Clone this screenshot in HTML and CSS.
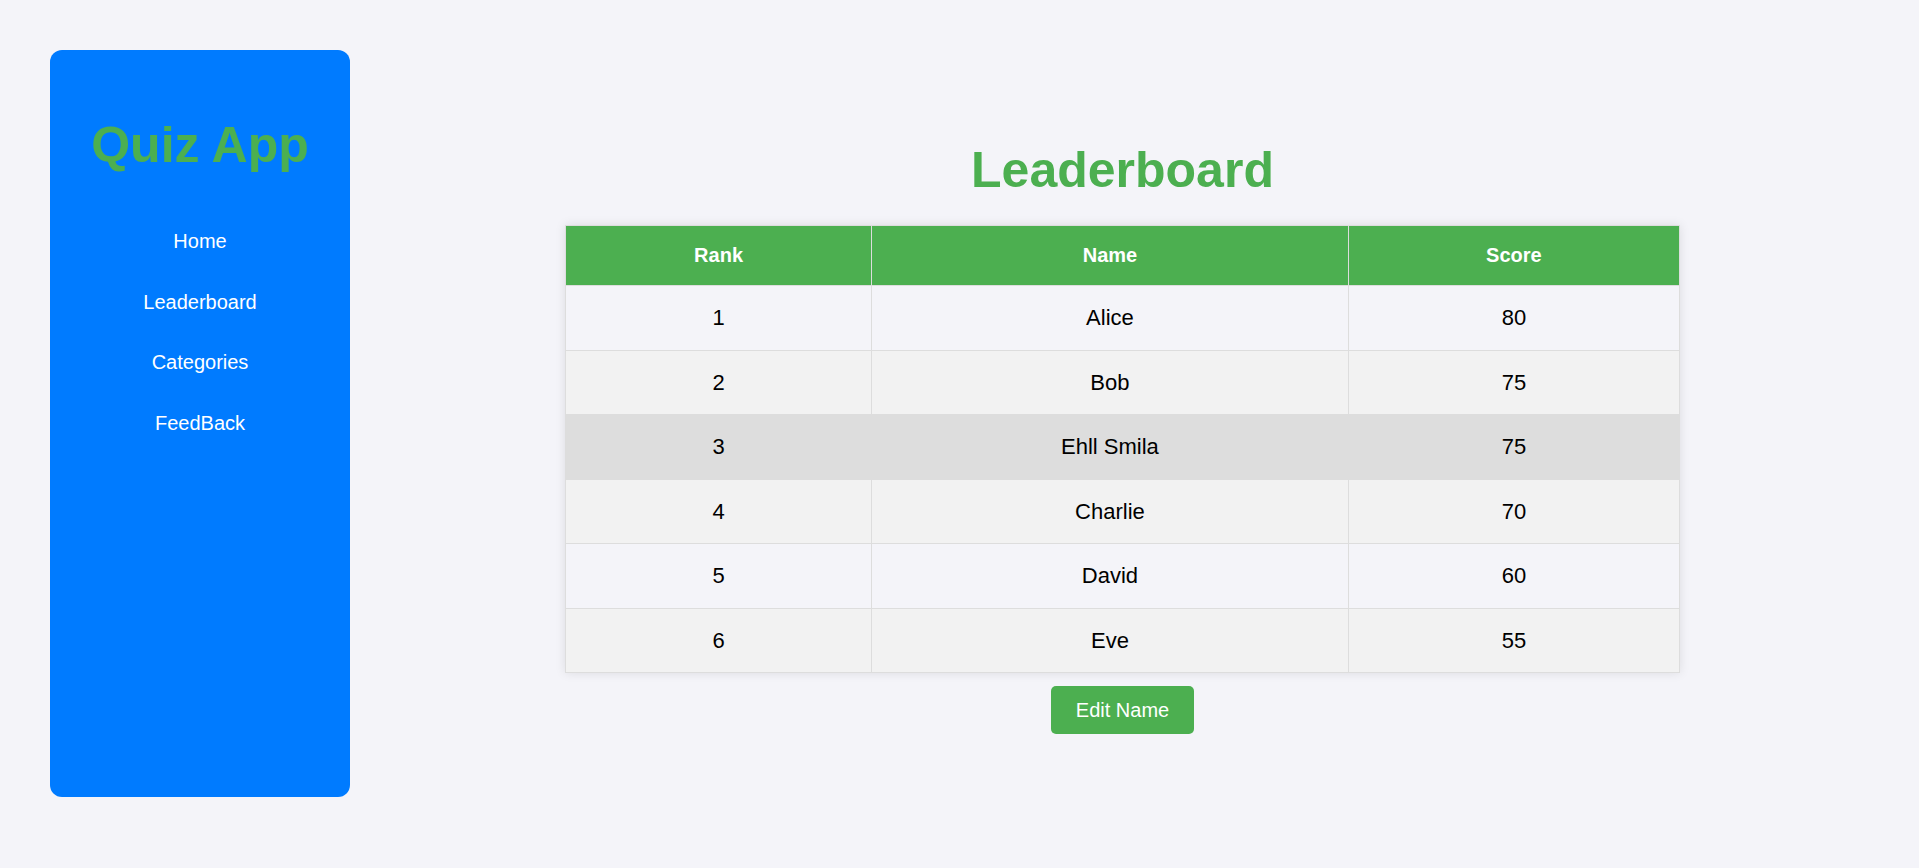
FILE: index.html
```html
<!DOCTYPE html>
<html lang="en">
<head>
<meta charset="UTF-8">
<title>Quiz App - Leaderboard</title>
<link rel="stylesheet" href="styles.css">
</head>
<body>
<div class="layout">
  <aside class="sidebar">
    <h1 class="brand">Quiz App</h1>
    <nav class="nav">
      <a href="#" class="nav-link">Home</a>
      <a href="#" class="nav-link">Leaderboard</a>
      <a href="#" class="nav-link">Categories</a>
      <a href="#" class="nav-link">FeedBack</a>
    </nav>
  </aside>
  <main class="main">
    <h1 class="title">Leaderboard</h1>
    <table class="board">
      <colgroup>
        <col class="c-rank">
        <col class="c-name">
        <col class="c-score">
      </colgroup>
      <thead>
        <tr><th>Rank</th><th>Name</th><th>Score</th></tr>
      </thead>
      <tbody>
        <tr><td>1</td><td>Alice</td><td>80</td></tr>
        <tr><td>2</td><td>Bob</td><td>75</td></tr>
        <tr class="active"><td>3</td><td>Ehll Smila</td><td>75</td></tr>
        <tr><td>4</td><td>Charlie</td><td>70</td></tr>
        <tr><td>5</td><td>David</td><td>60</td></tr>
        <tr><td>6</td><td>Eve</td><td>55</td></tr>
      </tbody>
    </table>
    <button class="edit-btn">Edit Name</button>
  </main>
</div>
</body>
</html>
```
FILE: styles.css
```css
html, body {
  margin: 0;
  padding: 0;
}
body {
  background: #f4f4f9;
  font-family: "Liberation Sans", Arial, sans-serif;
  color: #000;
}
.layout {
  display: flex;
  align-items: flex-start;
  padding: 50px 0 0 50px;
}
.sidebar {
  width: 300px;
  height: 747px;
  flex: 0 0 300px;
  background: #007bff;
  border-radius: 12px;
  box-sizing: border-box;
  padding-top: 67px;
  text-align: center;
}
.brand {
  margin: 0;
  font-size: 50px;
  line-height: 57px;
  font-weight: bold;
  color: #4caf50;
}
.nav {
  display: flex;
  flex-direction: column;
  margin-top: 37px;
}
.nav-link {
  display: block;
  color: #fff;
  text-decoration: none;
  font-size: 20px;
  line-height: 22.5px;
  padding: 19px 0;
}
.main {
  flex: 1;
  padding: 0 100px 0 76px;
  text-align: center;
}
.title {
  margin: 92px 0 26px;
  font-size: 50px;
  line-height: 57px;
  font-weight: bold;
  color: #4caf50;
}
.board {
  width: 80%;
  margin: 0 auto;
  border-collapse: collapse;
  box-shadow: 0 0 10px rgba(0, 0, 0, 0.1);
  table-layout: fixed;
}
.c-rank { width: 27.44%; }
.c-name { width: 42.87%; }
.c-score { width: 29.69%; }
.board th,
.board td {
  border: 1px solid #ddd;
  text-align: center;
}
.board th {
  background: #4caf50;
  color: #fff;
  font-size: 20px;
  line-height: 23px;
  font-weight: bold;
  padding: 18px 10px;
}
.board td {
  font-size: 22px;
  line-height: 23.5px;
  padding: 20px 10px;
}
.board tbody tr:nth-child(even) {
  background: #f2f2f2;
}
.board tbody tr.active {
  background: #ddd;
}
.edit-btn {
  margin-top: 13px;
  background: #4caf50;
  color: #fff;
  border: none;
  border-radius: 5px;
  font-family: "Liberation Sans", Arial, sans-serif;
  font-size: 20px;
  line-height: 23px;
  padding: 12.5px 25px;
  cursor: pointer;
}
```
